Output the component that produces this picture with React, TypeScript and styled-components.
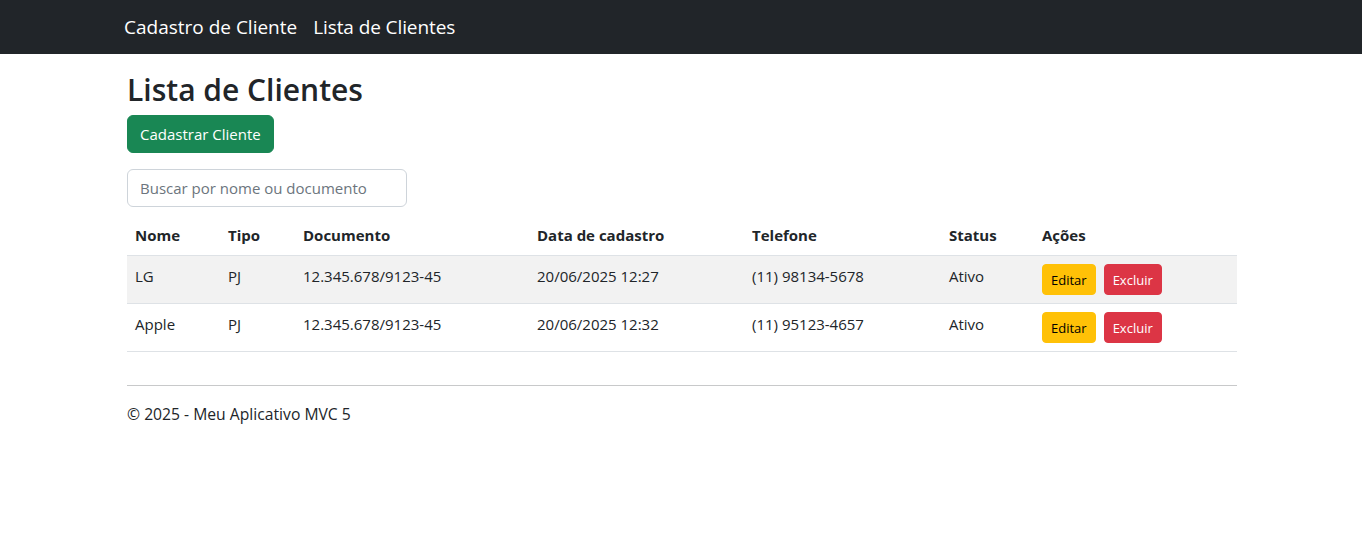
import React, { useState } from 'react'
import styled, { createGlobalStyle } from 'styled-components'

interface cliente {
  nome: string
  tipo: string
  documento: string
  data: string
  telefone: string
  status: string
}

const clientes: cliente[] = [
  { nome: "LG", tipo: "PJ", documento: "12.345.678/9123-45", data: "20/06/2025 12:27", telefone: "(11) 98134-5678", status: "Ativo" },
  { nome: "Apple", tipo: "PJ", documento: "12.345.678/9123-45", data: "20/06/2025 12:32", telefone: "(11) 95123-4657", status: "Ativo" },
]

const colunas = [
  { label: "Nome", w: 93 },
  { label: "Tipo", w: 75 },
  { label: "Documento", w: 234 },
  { label: "Data de cadastro", w: 215 },
  { label: "Telefone", w: 197 },
  { label: "Status", w: 93 },
  { label: "Ações", w: 203 },
]

export default function App() {
  const [busca, setBusca] = useState("")
  const lista = clientes.filter(c =>
    c.nome.toLowerCase().includes(busca.toLowerCase()) || c.documento.includes(busca))

  return <>
    <GlobalStyle/>
    <NavBar>
      <NavInner>
        <Brand href="#">Cadastro de Cliente</Brand>
        <NavLink href="#">Lista de Clientes</NavLink>
      </NavInner>
    </NavBar>
    <Main>
      <Title>Lista de Clientes</Title>
      <Button $variant="success">Cadastrar Cliente</Button>
      <SearchInput
        placeholder="Buscar por nome ou documento"
        value={busca}
        onChange={e => setBusca(e.target.value)}
      />
      <Table>
        <colgroup>
          {colunas.map(c => <col key={c.label} style={{ width: c.w }}/>)}
        </colgroup>
        <thead>
          <tr>
            {colunas.map(c => <Th key={c.label}>{c.label}</Th>)}
          </tr>
        </thead>
        <tbody>
          {lista.map((c, i) => <Tr key={c.nome} $striped={i % 2 === 0}>
            <Td>{c.nome}</Td>
            <Td>{c.tipo}</Td>
            <Td>{c.documento}</Td>
            <Td>{c.data}</Td>
            <Td>{c.telefone}</Td>
            <Td>{c.status}</Td>
            <Td>
              <Actions>
                <SmallButton $variant="warning">Editar</SmallButton>
                <SmallButton $variant="danger">Excluir</SmallButton>
              </Actions>
            </Td>
          </Tr>)}
        </tbody>
      </Table>
      <Rule/>
      <Footer>© 2025 - Meu Aplicativo MVC 5</Footer>
    </Main>
  </>
}

const GlobalStyle = createGlobalStyle`
  * { box-sizing: border-box; }
  body {
    margin: 0;
    font-family: "Open Sans", "Noto Sans", sans-serif;
    font-size: 15px;
    line-height: 1.5;
    color: #212529;
    background: #fff;
  }
`

const NavBar = styled.nav`
  background: #212529;
  height: 54px;
`

const NavInner = styled.div`
  width: 1140px;
  margin: 0 auto;
  padding: 0 13px;
  height: 100%;
  display: flex;
  align-items: center;
  gap: 16px;
`

const Brand = styled.a`
  color: #fff;
  font-size: 19px;
  text-decoration: none;
`

const NavLink = styled.a`
  color: #fff;
  font-size: 19px;
  letter-spacing: -0.1px;
  text-decoration: none;
`

const Main = styled.main`
  width: 1140px;
  margin: 0 auto;
  padding: 15px 14px 0 16px;
  display: flex;
  flex-direction: column;
  align-items: flex-start;
`

const Title = styled.h1`
  font-size: 30px;
  font-weight: 600;
  line-height: 38px;
  margin: 2px 0 6px;
`

const colors: Record<string, { bg: string, fg: string }> = {
  success: { bg: "#198754", fg: "#fff" },
  warning: { bg: "#ffc107", fg: "#000" },
  danger: { bg: "#dc3545", fg: "#fff" },
}

const Button = styled.button<{ $variant: string }>`
  background: ${p => colors[p.$variant].bg};
  color: ${p => colors[p.$variant].fg};
  border: 1px solid ${p => colors[p.$variant].bg};
  border-radius: 6px;
  height: 38px;
  padding: 0 12px;
  font-family: inherit;
  font-size: 15px;
  cursor: pointer;
`

const SmallButton = styled(Button)`
  height: 31px;
  padding: 0 8px;
  font-size: 13px;
  border-radius: 4px;
`

const SearchInput = styled.input`
  margin-top: 16px;
  width: 280px;
  height: 38px;
  padding: 0 12px;
  border: 1px solid #ced4da;
  border-radius: 6px;
  font-family: inherit;
  font-size: 15px;
  color: #212529;
  &::placeholder { color: #6c757d; }
`

const Table = styled.table`
  margin-top: 8px;
  width: 100%;
  table-layout: fixed;
  border-collapse: collapse;
`

const Th = styled.th`
  text-align: left;
  font-weight: 700;
  padding: 8px;
  border-bottom: 1px solid #dee2e6;
  line-height: 24px;
`

const Tr = styled.tr<{ $striped: boolean }>`
  background: ${p => p.$striped ? "#f2f2f2" : "transparent"};
`

const Td = styled.td`
  padding: 8px;
  vertical-align: top;
  line-height: 24px;
  border-bottom: 1px solid #dee2e6;
`

const Actions = styled.div`
  display: flex;
  gap: 8px;
`

const Rule = styled.hr`
  width: 100%;
  margin: 33px 0 16px;
  border: 0;
  border-top: 1px solid #c8c9ca;
`

const Footer = styled.footer`
  font-size: 15.7px;
  line-height: 24px;
`
